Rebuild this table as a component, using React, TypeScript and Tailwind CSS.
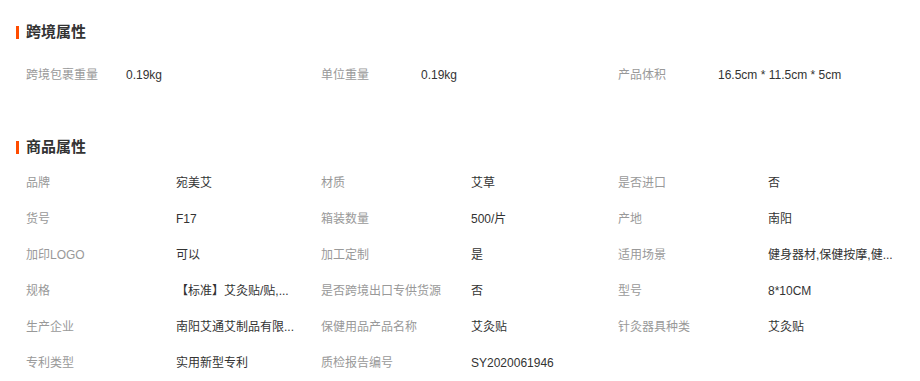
const crossBorder = [
  { label: "跨境包裹重量", value: "0.19kg" },
  { label: "单位重量", value: "0.19kg" },
  { label: "产品体积", value: "16.5cm * 11.5cm * 5cm" },
];

// values are shown already shortened, as the page does
const productAttrs = [
  { label: "品牌", value: "宛美艾" },
  { label: "材质", value: "艾草" },
  { label: "是否进口", value: "否" },
  { label: "货号", value: "F17" },
  { label: "箱装数量", value: "500/片" },
  { label: "产地", value: "南阳" },
  { label: "加印LOGO", value: "可以" },
  { label: "加工定制", value: "是" },
  { label: "适用场景", value: "健身器材,保健按摩,健..." },
  { label: "规格", value: "【标准】艾灸贴/贴,..." },
  { label: "是否跨境出口专供货源", value: "否" },
  { label: "型号", value: "8*10CM" },
  { label: "生产企业", value: "南阳艾通艾制品有限..." },
  { label: "保健用品产品名称", value: "艾灸贴" },
  { label: "针灸器具种类", value: "艾灸贴" },
  { label: "专利类型", value: "实用新型专利" },
  { label: "质检报告编号", value: "SY2020061946" },
];

function SectionTitle({ title }: { title: string }) {
  return (
    <div className="flex h-5 items-center pl-4">
      <span className="h-[13px] w-[3px] bg-[#ff4c00]" />
      <span className="ml-[7px] text-[15px] font-bold leading-5 text-[#333]">{title}</span>
    </div>
  );
}

export default function App() {
  return (
    <div
      className="h-[381px] w-[920px] overflow-hidden bg-white text-xs"
      style={{ fontFamily: '"Liberation Sans", "Noto Sans CJK SC", sans-serif' }}
    >
      {/* 跨境属性 */}
      <div className="pt-[22px]">
        <SectionTitle title="跨境属性" />
        <div className="mt-[15px] grid grid-cols-[295px_297px_1fr] pl-[26px]">
          {crossBorder.map((item) => (
            <div key={item.label} className="flex h-9 items-center">
              <span className="w-[100px] text-[#999]">{item.label}</span>
              <span className="text-[#333]">{item.value}</span>
            </div>
          ))}
        </div>
      </div>

      {/* 商品属性 */}
      <div className="mt-[44px]">
        <SectionTitle title="商品属性" />
        <div className="mt-[8px] grid grid-cols-[295px_297px_1fr] pl-[26px]">
          {productAttrs.map((item) => (
            <div key={item.label} className="flex h-9 items-center">
              <span className="w-[150px] shrink-0 whitespace-nowrap text-[#999]">{item.label}</span>
              <span className="whitespace-nowrap text-[#333]">{item.value}</span>
            </div>
          ))}
        </div>
      </div>
    </div>
  );
}
